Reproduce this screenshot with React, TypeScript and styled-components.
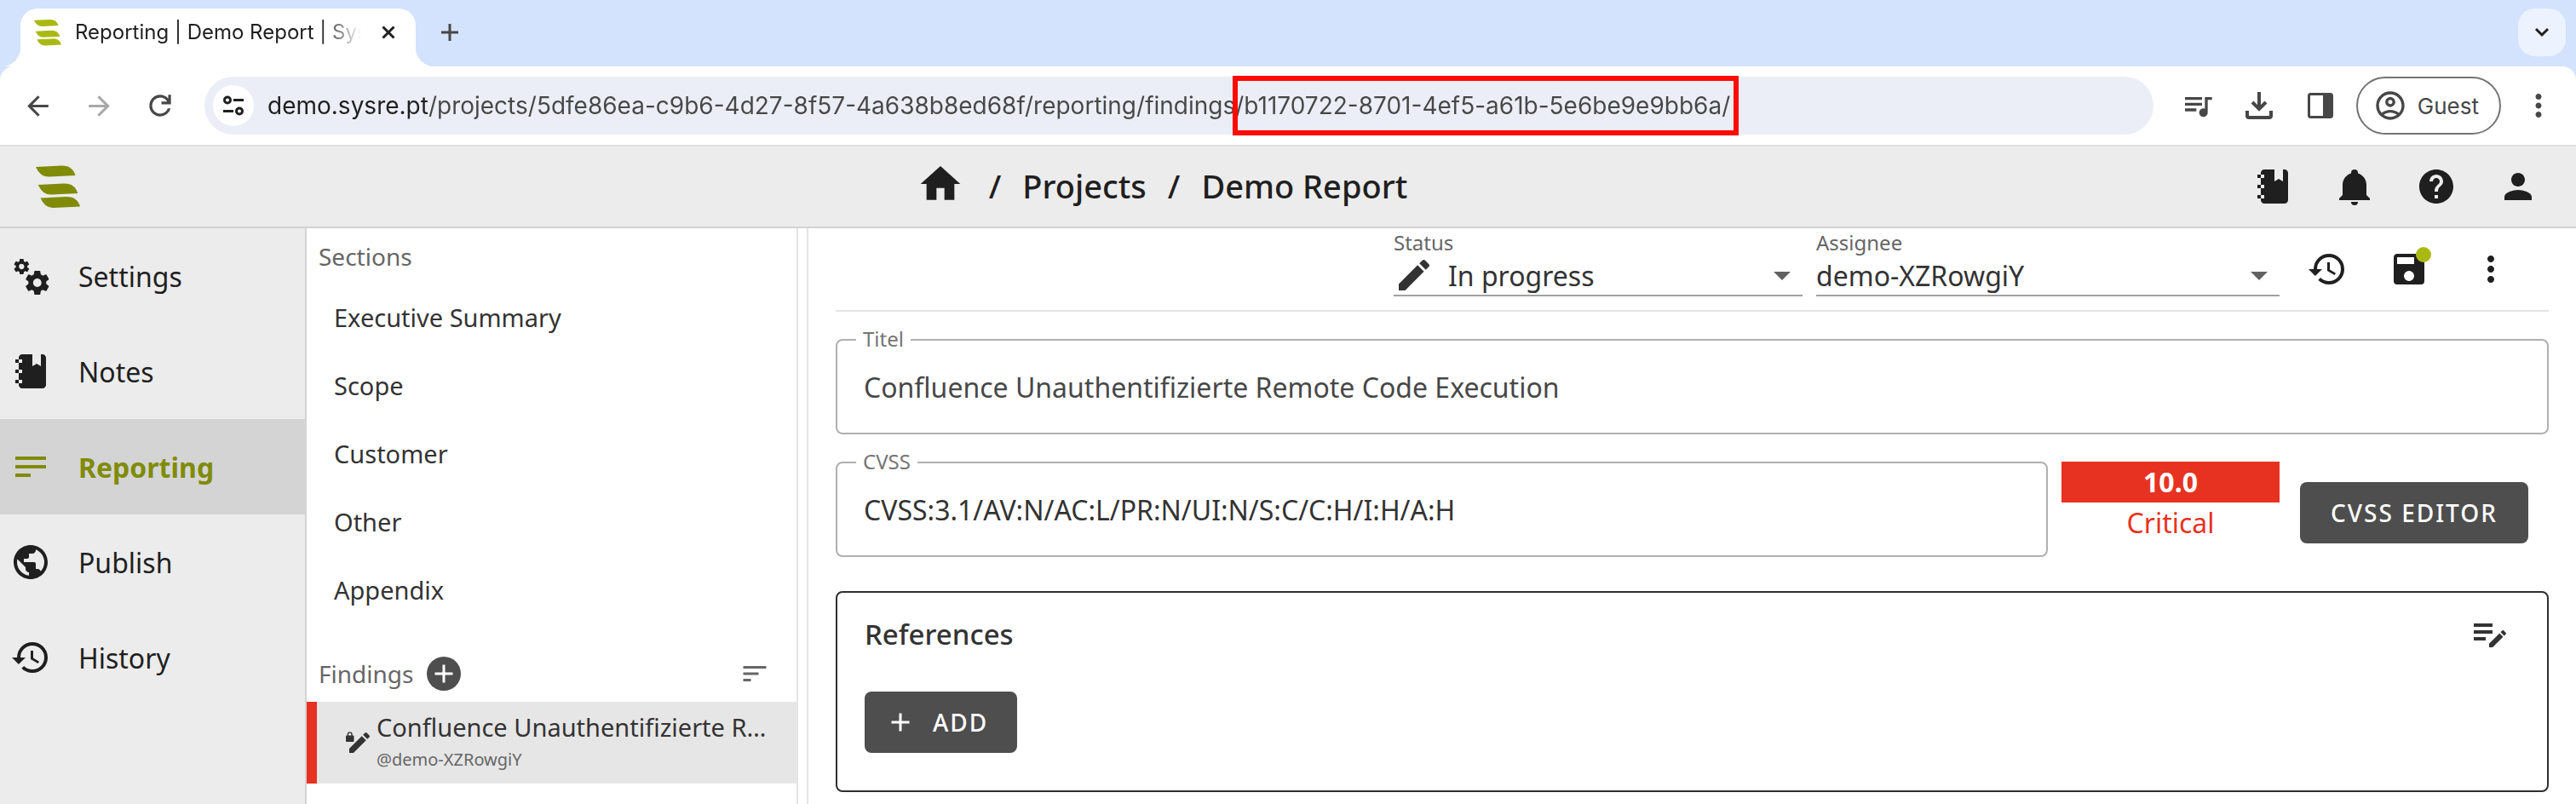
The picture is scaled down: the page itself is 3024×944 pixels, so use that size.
import React from "react";
import styled, { createGlobalStyle, css } from "styled-components";
import {
  MdHelp,
  MdHome,
  MdMoreVert,
  MdOutlineAccountCircle,
  MdPerson,
  MdPublic,
  MdQueueMusic,
  MdSort,
} from "react-icons/md";

const color = {
  ink: "#1f1f1f",
  text: "#333333",
  muted: "#666666",
  chrome: "#474747",
  strip: "#d3e3fd",
  bar: "#ececec",
  line: "#d3d3d3",
  softLine: "#e4e4e4",
  fieldLine: "#b0b0b0",
  dark: "#4e4e4e",
  critical: "#e83221",
  brand: "#808b08",
  brandLight: "#a9b912",
};

const GlobalStyle = createGlobalStyle`
  *, *::before, *::after { box-sizing: border-box; }
  body {
    margin: 0;
    background: #fff;
    color: ${color.ink};
    font-family: "Noto Sans", sans-serif;
    font-size: 32px;
  }
  button, input, select { font: inherit; color: inherit; }
  a { color: inherit; text-decoration: none; }
  svg { display: block; flex: none; }
`;

/* ---------- icons ---------- */

const Mdi = ({ d, size = 48 }: { d: string; size?: number }) => (
  <svg width={size} height={size} viewBox="0 0 24 24" fill="currentColor" aria-hidden="true">
    <path d={d} />
  </svg>
);

const paths = {
  notebook:
    "M3,7V5H5V4C5,2.89 5.9,2 7,2H13V9L15.5,7.5L18,9V2H19C20.05,2 21,2.95 21,4V20C21,21.05 20.05,22 19,22H7C5.95,22 5,21.05 5,20V19H3V17H5V13H3V11H5V7H3M7,11H5V13H7V11M7,7V5H5V7H7M7,19V17H5V19H7Z",
  bell:
    "M21,19V20H3V19L5,17V11C5,7.9 7.03,5.17 10,4.29C10,4.19 10,4.1 10,4A2,2 0 0,1 12,2A2,2 0 0,1 14,4C14,4.1 14,4.19 14,4.29C16.97,5.17 19,7.9 19,11V17L21,19M14,21A2,2 0 0,1 12,23A2,2 0 0,1 10,21",
  cogs:
    "M15.9,18.45C17.25,18.45 18.35,17.35 18.35,16C18.35,14.65 17.25,13.55 15.9,13.55C14.54,13.55 13.45,14.65 13.45,16C13.45,17.35 14.54,18.45 15.9,18.45M21.1,16.68L22.58,17.84C22.71,17.95 22.75,18.13 22.66,18.29L21.26,20.71C21.17,20.86 21,20.92 20.83,20.86L19.09,20.16C18.73,20.44 18.33,20.67 17.91,20.85L17.64,22.7C17.62,22.87 17.47,23 17.3,23H14.5C14.32,23 14.18,22.87 14.15,22.7L13.89,20.85C13.46,20.67 13.07,20.44 12.71,20.16L10.96,20.86C10.81,20.92 10.62,20.86 10.54,20.71L9.14,18.29C9.05,18.13 9.09,17.95 9.22,17.84L10.7,16.68L10.65,16L10.7,15.31L9.22,14.16C9.09,14.05 9.05,13.86 9.14,13.71L10.54,11.29C10.62,11.13 10.81,11.07 10.96,11.13L12.71,11.84C13.07,11.56 13.46,11.32 13.89,11.15L14.15,9.29C14.18,9.13 14.32,9 14.5,9H17.3C17.47,9 17.62,9.13 17.64,9.29L17.91,11.15C18.33,11.32 18.73,11.56 19.09,11.84L20.83,11.13C21,11.07 21.17,11.13 21.26,11.29L22.66,13.71C22.75,13.86 22.71,14.05 22.58,14.16L21.1,15.31L21.15,16L21.1,16.68M6.69,8.07C7.56,8.07 8.26,7.37 8.26,6.5C8.26,5.63 7.56,4.92 6.69,4.92A1.58,1.58 0 0,0 5.11,6.5C5.11,7.37 5.82,8.07 6.69,8.07M10.03,6.94L11,7.68C11.07,7.75 11.09,7.87 11.03,7.97L10.13,9.53C10.08,9.63 9.96,9.67 9.86,9.63L8.74,9.18L8,9.62L7.81,10.81C7.79,10.92 7.7,11 7.59,11H5.79C5.67,11 5.58,10.92 5.56,10.81L5.4,9.62L4.64,9.18L3.52,9.63C3.41,9.67 3.3,9.63 3.24,9.53L2.34,7.97C2.28,7.87 2.31,7.75 2.39,7.68L3.34,6.94L3.31,6.5L3.34,6.06L2.39,5.32C2.31,5.25 2.28,5.13 2.34,5.03L3.24,3.47C3.3,3.37 3.41,3.32 3.52,3.37L4.63,3.82L5.4,3.38L5.56,2.19C5.58,2.08 5.67,2 5.79,2H7.59C7.7,2 7.79,2.08 7.81,2.19L8,3.38L8.74,3.82L9.86,3.37C9.96,3.32 10.08,3.37 10.13,3.47L11.03,5.03C11.09,5.13 11.07,5.25 11,5.32L10.03,6.06L10.06,6.5L10.03,6.94Z",
  text: "M21,6V8H3V6H21M3,18H12V16H3V18M3,13H21V11H3V13Z",
  history:
    "M13.5,8H12V13L16.28,15.54L17,14.33L13.5,12.25V8M13,3A9,9 0 0,0 4,12H1L4.96,16.03L9,12H6A7,7 0 0,1 13,5A7,7 0 0,1 20,12A7,7 0 0,1 13,19C11.07,19 9.32,18.21 8.06,16.94L6.64,18.36C8.27,20 10.5,21 13,21A9,9 0 0,0 22,12A9,9 0 0,0 13,3",
  save:
    "M15,9H5V5H15M12,19A3,3 0 0,1 9,16A3,3 0 0,1 12,13A3,3 0 0,1 15,16A3,3 0 0,1 12,19M17,3H5C3.89,3 3,3.9 3,5V19A2,2 0 0,0 5,21H19A2,2 0 0,0 21,19V7L17,3Z",
  pencil:
    "M20.71,7.04C21.1,6.65 21.1,6 20.71,5.63L18.37,3.29C18,2.9 17.35,2.9 16.96,3.29L15.12,5.12L18.87,8.87M3,17.25V21H6.75L17.81,9.93L14.06,6.18L3,17.25Z",
  menuDown: "M7,10L12,15L17,10H7Z",
  plus: "M19,13H13V19H11V13H5V11H11V5H13V11H19V13Z",
  back: "m7.825 13 5.6 5.6L12 20l-8-8 8-8 1.425 1.4-5.6 5.6H20v2z",
  forward: "M16.175 13H4v-2h12.175l-5.6-5.6L12 4l8 8-8 8-1.425-1.4z",
  reload:
    "M12 20q-3.35 0-5.675-2.325T4 12t2.325-5.675T12 4q1.725 0 3.3.713T18 6.75V4h2v7h-7V9h4.2q-.8-1.4-2.187-2.2T12 6Q9.5 6 7.75 7.75T6 12t1.75 4.25T12 18q1.925 0 3.475-1.1T17.65 14h2.1q-.7 2.65-2.85 4.325T12 20",
};

const LEAF = "M0 2 L30 0.5 Q43 0 46.5 12 L16 13.5 Q5 14 0 2Z";

const Logo = ({ width, height, fill }: { width: number; height: number; fill: string }) => (
  <svg width={width} height={height} viewBox="0 0 52 50" fill={fill} aria-hidden="true">
    <path d={LEAF} />
    <path d={LEAF} transform="translate(2.8 21)" />
    <path d={LEAF} transform="translate(5.5 36.5)" />
  </svg>
);

const CloseIcon = () => (
  <svg width="16" height="16" viewBox="0 0 16 16" stroke="currentColor" strokeWidth="3" aria-hidden="true">
    <path d="M1.5 1.5l13 13M14.5 1.5l-13 13" />
  </svg>
);

const NewTabIcon = () => (
  <svg width="20" height="20" viewBox="0 0 20 20" stroke="currentColor" strokeWidth="3" aria-hidden="true">
    <path d="M10 0v20M0 10h20" />
  </svg>
);

const ChevronIcon = () => (
  <svg width="18" height="12" viewBox="0 0 18 12" fill="none" stroke="currentColor" strokeWidth="3" aria-hidden="true">
    <path d="M2 2l7 7 7-7" />
  </svg>
);

const SiteInfoIcon = () => (
  <svg width="24" height="24" viewBox="0 0 24 24" fill="none" stroke="currentColor" strokeWidth="3" aria-hidden="true">
    <circle cx="5" cy="5.5" r="3.5" />
    <path d="M12 5.5h12M0 18.5h12" />
    <circle cx="19" cy="18.5" r="3.5" />
  </svg>
);

const DownloadIcon = () => (
  <svg width="32" height="32" viewBox="0 0 32 32" fill="none" stroke="currentColor" strokeWidth="4" aria-hidden="true">
    <path d="M16 0v20M8 12l8 8 8-8" />
    <path d="M2 22v6a2 2 0 0 0 2 2h24a2 2 0 0 0 2-2v-6" />
  </svg>
);

const SidePanelIcon = () => (
  <svg width="30" height="30" viewBox="0 0 30 30" aria-hidden="true">
    <rect x="1.5" y="1.5" width="27" height="27" rx="2" fill="none" stroke="currentColor" strokeWidth="3" />
    <path d="M18 2h10v26H18z" fill="currentColor" />
  </svg>
);

const EditNoteIcon = () => (
  <svg width="48" height="48" viewBox="0 0 24 24" fill="currentColor" aria-hidden="true">
    <path d="M3 6h11v2H3zM3 10h11v2H3zM3 14h7v2H3z" />
    <path d={paths.pencil} transform="translate(10.33 8.33) scale(.555)" />
  </svg>
);

const LockedEditIcon = () => (
  <svg width="28" height="26" viewBox="0 0 28 26" fill="currentColor" aria-hidden="true">
    <path d={paths.pencil} transform="translate(0 -3) scale(1.333)" />
    <rect x="0" y="4.5" width="9.5" height="7.5" rx="1" />
    <path d="M2.4 5V3.2a2.3 2.3 0 0 1 4.6 0V5" fill="none" stroke="currentColor" strokeWidth="1.4" />
  </svg>
);

/* ---------- browser frame ---------- */

const Page = styled.div`
  display: flex;
  flex-direction: column;
  min-height: 100vh;
`;

const Browser = styled.div`
  background: ${color.strip};
  color: ${color.chrome};
  font-family: Inter, "Liberation Sans", sans-serif;
`;

const TabStrip = styled.div`
  display: flex;
  align-items: center;
  height: 78px;
  padding: 10px 12px 0 24px;
`;

const Tab = styled.div`
  position: relative;
  display: flex;
  align-items: center;
  width: 464px;
  height: 68px;
  padding: 0 24px 12px 16px;
  border-radius: 20px 20px 0 0;
  background: #fff;
  color: ${color.ink};

  &::before,
  &::after {
    content: "";
    position: absolute;
    bottom: 0;
    width: 22px;
    height: 22px;
  }
  &::before {
    right: 100%;
    background: radial-gradient(circle at 0 0, transparent 22px, #fff 22px);
  }
  &::after {
    left: 100%;
    background: radial-gradient(circle at 100% 0, transparent 22px, #fff 22px);
  }
`;

const TabTitle = styled.span`
  flex: 1;
  min-width: 0;
  margin: 0 24px 0 16px;
  overflow: hidden;
  white-space: nowrap;
  font-size: 24px;
  line-height: 32px;
  mask-image: linear-gradient(to right, #000 86%, transparent);
`;

const PlainButton = styled.button<{ $width?: number }>`
  display: flex;
  align-items: center;
  justify-content: center;
  flex: none;
  width: ${(p) => (p.$width ? `${p.$width}px` : "auto")};
  height: 56px;
  padding: 0;
  border: 0;
  background: none;
`;

const NewTabSlot = styled.div`
  flex: 1;
  padding: 0 0 12px 12px;
`;

const TabSearch = styled(PlainButton)`
  margin-bottom: 12px;
  border-radius: 20px;
  background: #ecf2fe;
  color: ${color.ink};
`;

const Toolbar = styled.div`
  display: flex;
  align-items: center;
  height: 94px;
  padding: 0 8px;
  border-bottom: 2px solid #e0e0e0;
  border-radius: 16px 16px 0 0;
  background: #fff;
`;

const NavButton = styled(PlainButton)`
  &:disabled {
    color: #a8a8a8;
  }
`;

const AddressBar = styled.div`
  position: relative;
  display: flex;
  align-items: center;
  flex: 1;
  gap: 16px;
  height: 68px;
  margin: 0 12px 0 16px;
  padding: 0 10px;
  border-radius: 34px;
  background: #ebeef7;
`;

const SiteInfo = styled(PlainButton)`
  height: 48px;
  border-radius: 24px;
  background: #fff;
  color: ${color.ink};
`;

const Address = styled.input`
  flex: 1;
  min-width: 0;
  height: 48px;
  padding: 0;
  border: 0;
  outline: 0;
  background: linear-gradient(to right, ${color.ink} 188px, ${color.chrome} 188px);
  background-clip: text;
  -webkit-text-fill-color: transparent;
  font-size: 28px;
`;

const Marker = styled.div`
  position: absolute;
  top: -1px;
  left: 1207px;
  width: 594px;
  height: 70px;
  border: 6px solid #ff0a00;
  pointer-events: none;
`;

const GuestButton = styled.button`
  display: flex;
  align-items: center;
  gap: 12px;
  height: 68px;
  margin: 0 8px 0 2px;
  padding: 0 24px 0 18px;
  border: 2px solid #747474;
  border-radius: 34px;
  background: #fff;
  font-size: 26px;
`;

/* ---------- application header ---------- */

const AppBar = styled.header`
  display: flex;
  align-items: center;
  height: 96px;
  padding: 0 20px 0 42px;
  border-bottom: 2px solid ${color.line};
  background: ${color.bar};
`;

const Breadcrumbs = styled.nav`
  display: flex;
  align-items: center;
  justify-content: center;
  flex: 1;
  gap: 25px;
  padding: 0 0 2px 14px;
  font-size: 38px;
  font-weight: 500;
  line-height: 56px;
`;

const HomeLink = styled.a`
  padding: 0 4px 4px 0;
`;

/* ---------- body ---------- */

const Body = styled.div`
  display: flex;
  flex: 1;
`;

const SideNav = styled.nav`
  flex: none;
  width: 360px;
  border-right: 2px solid ${color.line};
  background: ${color.bar};
`;

const NavItem = styled.a<{ $active?: boolean }>`
  display: flex;
  align-items: center;
  gap: 32px;
  height: 112px;
  padding-left: 12px;
  ${(p) =>
    p.$active &&
    css`
      margin-right: -2px;
      background: #d4d4d4;
      color: ${color.brand};
      font-weight: 700;
    `}
`;

const Outline = styled.aside`
  flex: none;
  width: 577px;
  border-right: 2px solid ${color.softLine};
  color: ${color.text};
`;

const OutlineHeader = styled.div<{ $spaced?: boolean }>`
  display: flex;
  align-items: center;
  height: 66px;
  margin-top: ${(p) => (p.$spaced ? 24 : 0)}px;
  padding: 0 31px 0 14px;
  color: ${color.muted};
  font-size: 28px;
`;

const AddFinding = styled.button`
  display: flex;
  align-items: center;
  justify-content: center;
  width: 40px;
  height: 40px;
  margin: 0 auto 0 16px;
  padding: 0;
  border: 0;
  border-radius: 20px;
  background: ${color.dark};
  color: #fff;
`;

const SectionLink = styled.a`
  display: flex;
  align-items: center;
  height: 80px;
  padding: 0 32px 4px;
  font-size: 29px;
`;

const FindingLink = styled.a`
  display: flex;
  align-items: center;
  gap: 8px;
  height: 96px;
  margin-right: -2px;
  padding: 0 34px;
  border-left: 12px solid ${color.critical};
  background: #e6e6e6;
`;

const FindingText = styled.div`
  flex: 1;
  min-width: 0;
`;

const FindingTitle = styled.div`
  overflow: hidden;
  white-space: nowrap;
  text-overflow: ellipsis;
  font-size: 29px;
  line-height: 40px;
`;

const FindingUser = styled.div`
  color: ${color.muted};
  font-size: 20px;
  line-height: 36px;
`;

const ResizeHandle = styled.div`
  flex: none;
  width: 12px;
  border-right: 2px solid ${color.softLine};
`;

const Main = styled.main`
  flex: 1;
  min-width: 0;
  padding: 0 32px;
  color: ${color.text};
`;

const FindingBar = styled.div`
  display: flex;
  align-items: center;
  justify-content: flex-end;
  gap: 16px;
  height: 98px;
  padding-right: 20px;
  border-bottom: 2px solid ${color.softLine};
`;

const FindingActions = styled.div`
  display: flex;
  margin-left: -8px;
  color: ${color.ink};
`;

const SelectField = styled.div<{ $width: number }>`
  width: ${(p) => p.$width}px;
  padding-bottom: 14px;
`;

const SelectLabel = styled.label`
  display: block;
  color: ${color.muted};
  font-size: 24px;
  line-height: 30px;
`;

const SelectRow = styled.div`
  display: flex;
  align-items: center;
  height: 48px;
  border-bottom: 2px solid #a0a0a0;
`;

const Select = styled.select<{ $indent?: boolean }>`
  flex: 1;
  min-width: 0;
  height: 46px;
  padding: 0;
  margin-left: ${(p) => (p.$indent ? 16 : 0)}px;
  border: 0;
  outline: 0;
  background: none;
  appearance: none;
`;

const SelectArrow = styled.span`
  color: #616161;
`;

const SaveWrap = styled.span`
  position: relative;
`;

const UnsavedDot = styled.span`
  position: absolute;
  top: -2px;
  right: -2px;
  width: 18px;
  height: 18px;
  border-radius: 9px;
  background: ${color.brandLight};
`;

const Form = styled.form`
  padding: 32px 0 12px;
`;

const TextField = styled.div`
  position: relative;
  flex: 1;
`;

const FieldLabel = styled.label`
  position: absolute;
  top: -16px;
  left: 24px;
  padding: 0 8px;
  background: #fff;
  color: #757575;
  font-size: 24px;
  line-height: 32px;
`;

const FieldInput = styled.input<{ $soft?: boolean }>`
  display: block;
  width: 100%;
  height: 112px;
  padding: 0 31px;
  border: 2px solid ${color.fieldLine};
  border-radius: 8px;
  outline: 0;
  background: #fff;
  color: ${(p) => (p.$soft ? color.chrome : color.text)};
`;

const CvssRow = styled.div`
  display: flex;
  align-items: flex-start;
  margin: 32px 24px 40px 0;
`;

const Score = styled.div`
  width: 256px;
  margin: 0 24px 0 16px;
  color: ${color.critical};
  line-height: 48px;
  text-align: center;
`;

const ScoreValue = styled.div`
  background: ${color.critical};
  color: #fff;
  font-weight: 700;
`;

const DarkButton = styled.button`
  display: flex;
  align-items: center;
  height: 72px;
  padding: 0 34px;
  border: 0;
  border-radius: 8px;
  background: ${color.dark};
  color: #fff;
  font-size: 28px;
  font-weight: 500;
  letter-spacing: 2px;
`;

const CvssButton = styled(DarkButton)`
  margin-top: 24px;
  justify-content: center;
  width: 268px;
`;

const AddButton = styled(DarkButton)`
  gap: 20px;
  padding: 0 34px 0 24px;
`;

const Card = styled.section`
  padding: 20px 32px 44px;
  border: 2px solid #2f2f2f;
  border-radius: 8px;
`;

const CardHeader = styled.div`
  display: flex;
  align-items: center;
  justify-content: space-between;
  margin: 0 12px 40px 0;
`;

const CardTitle = styled.h2`
  margin: 0;
  font-size: 33px;
  font-weight: 500;
`;

const URL_TEXT =
  "demo.sysre.pt/projects/5dfe86ea-c9b6-4d27-8f57-4a638b8ed68f/reporting/findings/b1170722-8701-4ef5-a61b-5e6be9e9bb6a/";

const navItems = [
  { label: "Settings", icon: <Mdi d={paths.cogs} /> },
  { label: "Notes", icon: <Mdi d={paths.notebook} /> },
  { label: "Reporting", icon: <Mdi d={paths.text} />, active: true },
  { label: "Publish", icon: <MdPublic size={48} /> },
  { label: "History", icon: <Mdi d={paths.history} /> },
];

const sections = ["Executive Summary", "Scope", "Customer", "Other", "Appendix"];

const title = "Confluence Unauthentifizierte Remote Code Execution";

const BrowserFrame = () => (
  <Browser>
    <TabStrip>
      <Tab>
        <Logo width={32} height={32} fill={color.brandLight} />
        <TabTitle>Reporting | Demo Report | SysReptor</TabTitle>
        <PlainButton aria-label="Close tab">
          <CloseIcon />
        </PlainButton>
      </Tab>
      <NewTabSlot>
        <PlainButton $width={56} aria-label="New tab">
          <NewTabIcon />
        </PlainButton>
      </NewTabSlot>
      <TabSearch $width={56} aria-label="Search tabs">
        <ChevronIcon />
      </TabSearch>
    </TabStrip>
    <Toolbar>
      <NavButton $width={72} aria-label="Back">
        <Mdi d={paths.back} size={37} />
      </NavButton>
      <NavButton $width={72} aria-label="Forward" disabled>
        <Mdi d={paths.forward} size={37} />
      </NavButton>
      <NavButton $width={72} aria-label="Reload">
        <Mdi d={paths.reload} size={38} />
      </NavButton>
      <AddressBar>
        <SiteInfo $width={48} aria-label="Site information">
          <SiteInfoIcon />
        </SiteInfo>
        <Address aria-label="Address" defaultValue={URL_TEXT} spellCheck={false} />
        <Marker />
      </AddressBar>
      <NavButton $width={80} aria-label="Media">
        <MdQueueMusic size={40} />
      </NavButton>
      <NavButton $width={64} aria-label="Downloads">
        <DownloadIcon />
      </NavButton>
      <NavButton $width={80} aria-label="Side panel">
        <SidePanelIcon />
      </NavButton>
      <GuestButton>
        <MdOutlineAccountCircle size={40} />
        Guest
      </GuestButton>
      <NavButton $width={72} aria-label="Menu">
        <MdMoreVert size={42} />
      </NavButton>
    </Toolbar>
  </Browser>
);

const ApplicationHeader = () => (
  <AppBar>
    <a href="#start" aria-label="Start">
      <Logo width={52} height={50} fill={color.brand} />
    </a>
    <Breadcrumbs aria-label="Breadcrumb">
      <HomeLink href="#home" aria-label="Home">
        <MdHome size={56} />
      </HomeLink>
      <span>/</span>
      <a href="#projects">Projects</a>
      <span>/</span>
      <a href="#report">Demo Report</a>
    </Breadcrumbs>
    <PlainButton $width={96} aria-label="Personal notes">
      <Mdi d={paths.notebook} />
    </PlainButton>
    <PlainButton $width={96} aria-label="Notifications">
      <Mdi d={paths.bell} />
    </PlainButton>
    <PlainButton $width={96} aria-label="Help">
      <MdHelp size={48} />
    </PlainButton>
    <PlainButton $width={96} aria-label="Account">
      <MdPerson size={48} />
    </PlainButton>
  </AppBar>
);

export default function App() {
  return (
    <Page>
      <GlobalStyle />
      <BrowserFrame />
      <ApplicationHeader />
      <Body>
        <SideNav aria-label="Project">
          {navItems.map((item) => (
            <NavItem key={item.label} href={`#${item.label.toLowerCase()}`} $active={item.active}>
              {item.icon}
              {item.label}
            </NavItem>
          ))}
        </SideNav>
        <Outline>
          <OutlineHeader>Sections</OutlineHeader>
          {sections.map((name) => (
            <SectionLink key={name} href="#section">
              {name}
            </SectionLink>
          ))}
          <OutlineHeader $spaced>
            Findings
            <AddFinding aria-label="Add finding">
              <Mdi d={paths.plus} size={36} />
            </AddFinding>
            <PlainButton aria-label="Sort findings">
              <MdSort size={36} />
            </PlainButton>
          </OutlineHeader>
          <FindingLink href="#finding">
            <LockedEditIcon />
            <FindingText>
              <FindingTitle>{title}</FindingTitle>
              <FindingUser>@demo-XZRowgiY</FindingUser>
            </FindingText>
          </FindingLink>
        </Outline>
        <ResizeHandle />
        <Main>
          <FindingBar>
            <SelectField $width={480}>
              <SelectLabel htmlFor="status">Status</SelectLabel>
              <SelectRow>
                <Mdi d={paths.pencil} />
                <Select id="status" $indent>
                  <option>In progress</option>
                </Select>
                <SelectArrow>
                  <Mdi d={paths.menuDown} />
                </SelectArrow>
              </SelectRow>
            </SelectField>
            <SelectField $width={544}>
              <SelectLabel htmlFor="assignee">Assignee</SelectLabel>
              <SelectRow>
                <Select id="assignee">
                  <option>demo-XZRowgiY</option>
                </Select>
                <SelectArrow>
                  <Mdi d={paths.menuDown} />
                </SelectArrow>
              </SelectRow>
            </SelectField>
            <FindingActions>
              <PlainButton $width={96} aria-label="Version history">
                <Mdi d={paths.history} />
              </PlainButton>
              <PlainButton $width={96} aria-label="Save">
                <SaveWrap>
                  <Mdi d={paths.save} />
                  <UnsavedDot />
                </SaveWrap>
              </PlainButton>
              <PlainButton $width={96} aria-label="More actions">
                <MdMoreVert size={48} />
              </PlainButton>
            </FindingActions>
          </FindingBar>
          <Form onSubmit={(e) => e.preventDefault()}>
            <TextField>
              <FieldLabel htmlFor="title">Titel</FieldLabel>
              <FieldInput id="title" defaultValue={title} $soft />
            </TextField>
            <CvssRow>
              <TextField>
                <FieldLabel htmlFor="cvss">CVSS</FieldLabel>
                <FieldInput id="cvss" defaultValue="CVSS:3.1/AV:N/AC:L/PR:N/UI:N/S:C/C:H/I:H/A:H" />
              </TextField>
              <Score>
                <ScoreValue>10.0</ScoreValue>
                <div>Critical</div>
              </Score>
              <CvssButton type="button">CVSS EDITOR</CvssButton>
            </CvssRow>
            <Card>
              <CardHeader>
                <CardTitle>References</CardTitle>
                <PlainButton type="button" aria-label="Edit as text">
                  <EditNoteIcon />
                </PlainButton>
              </CardHeader>
              <AddButton type="button">
                <Mdi d={paths.plus} size={36} />
                ADD
              </AddButton>
            </Card>
          </Form>
        </Main>
      </Body>
    </Page>
  );
}
